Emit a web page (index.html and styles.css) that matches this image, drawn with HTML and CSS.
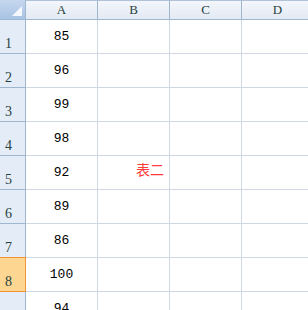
FILE: index.html
```html
<!DOCTYPE html>
<html lang="zh">
<head>
    <meta charset="utf-8">
    <title>表二</title>
    <link rel="stylesheet" href="styles.css">
</head>
<body>
    <div class="sheet">
        <div class="corner"><span class="tri"></span></div>
        <div class="colhead">A</div>
        <div class="colhead">B</div>
        <div class="colhead">C</div>
        <div class="colhead">D</div>

        <div class="rowhead">1</div><div class="cell num">85</div><div class="cell"></div><div class="cell"></div><div class="cell"></div>
        <div class="rowhead">2</div><div class="cell num">96</div><div class="cell"></div><div class="cell"></div><div class="cell"></div>
        <div class="rowhead">3</div><div class="cell num">99</div><div class="cell"></div><div class="cell"></div><div class="cell"></div>
        <div class="rowhead">4</div><div class="cell num">98</div><div class="cell"></div><div class="cell"></div><div class="cell"></div>
        <div class="rowhead">5</div><div class="cell num">92</div><div class="cell note">表二</div><div class="cell"></div><div class="cell"></div>
        <div class="rowhead">6</div><div class="cell num">89</div><div class="cell"></div><div class="cell"></div><div class="cell"></div>
        <div class="rowhead">7</div><div class="cell num">86</div><div class="cell"></div><div class="cell"></div><div class="cell"></div>
        <div class="rowhead active">8</div><div class="cell num">100</div><div class="cell"></div><div class="cell"></div><div class="cell"></div>
        <div class="rowhead">9</div><div class="cell num">94</div><div class="cell"></div><div class="cell"></div><div class="cell"></div>
    </div>
</body>
</html>
```

FILE: styles.css
```css
body {
    margin: 0;
    background: #ffffff;
    overflow: hidden;
}

.sheet {
    display: grid;
    grid-template-columns: 26px 72px 72px 72px 72px;
    grid-template-rows: 20px;
    grid-auto-rows: 34px;
    font-family: "Liberation Mono", monospace;
    font-size: 13px;
    color: #000;
}

.corner {
    position: relative;
    background: linear-gradient(#c5d7ee, #a9c3e4);
    border-right: 1px solid #9eb6ce;
    border-bottom: 1px solid #9eb6ce;
}

.tri {
    position: absolute;
    right: 3px;
    bottom: 3px;
    width: 0;
    height: 0;
    border-left: 10px solid transparent;
    border-bottom: 10px solid #f4f8fd;
}

.colhead {
    display: flex;
    align-items: center;
    justify-content: center;
    background: linear-gradient(#f3f6fb, #e3eaf4);
    border-top: 1px solid #aec2d8;
    border-right: 1px solid #9eb6ce;
    border-bottom: 1px solid #9eb6ce;
    color: #27413e;
    font-family: "Liberation Serif", serif;
    font-size: 13px;
}

.rowhead {
    display: flex;
    align-items: flex-end;
    padding: 0 0 1px 5px;
    background: #e4ecf7;
    border-right: 1px solid #9eb6ce;
    border-bottom: 1px solid #9eb6ce;
    color: #27413e;
    font-family: "Liberation Serif", serif;
    font-size: 14px;
}

.rowhead.active {
    background: #fdd792;
    border-top: 1px solid #f29436;
    border-bottom: 1px solid #f29436;
    border-right-color: #f29436;
    margin-top: -1px;
}

.cell {
    border-right: 1px solid #d0d7e5;
    border-bottom: 1px solid #d0d7e5;
}

.num {
    display: flex;
    align-items: center;
    justify-content: center;
    padding-bottom: 1px;
}

.note {
    display: flex;
    align-items: center;
    padding: 0 0 8px 38px;
    color: #ff3b3b;
    font-family: "Noto Sans CJK SC", sans-serif;
    font-size: 14px;
}
```
